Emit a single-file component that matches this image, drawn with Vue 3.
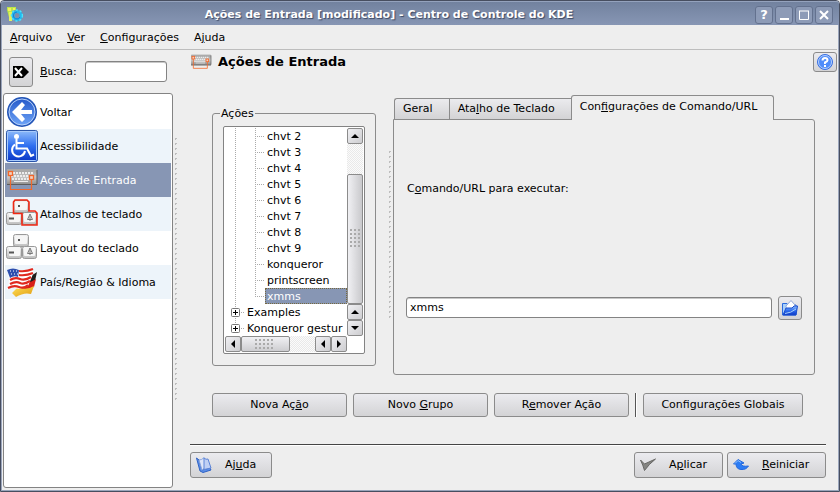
<script setup>
import { h, ref } from 'vue'

const search = ref('')
const command = ref('xmms')
const activeModule = ref('input')
const activeTab = ref('command')
const activeAction = ref('xmms')

const windowButtons = [
  { id: 'help', label: 'Ajuda' },
  { id: 'minimize', label: 'Minimizar' },
  { id: 'maximize', label: 'Maximizar' },
  { id: 'close', label: 'Fechar' }
]

const menus = ['&Arquivo', '&Ver', '&Configurações', 'A&juda']

const modules = [
  { id: 'back', label: 'Voltar' },
  { id: 'access', label: 'Acessibilidade' },
  { id: 'input', label: 'Ações de Entrada' },
  { id: 'shortcuts', label: 'Atalhos de teclado' },
  { id: 'layout', label: 'Layout do teclado' },
  { id: 'region', label: 'País/Região & Idioma' }
]

const actions = [
  'chvt 2', 'chvt 3', 'chvt 4', 'chvt 5', 'chvt 6', 'chvt 7',
  'chvt 8', 'chvt 9', 'konqueror', 'printscreen', 'xmms'
]
const groups = ['Examples', 'Konqueror gestur']

const tabs = [
  { id: 'general', label: 'Geral' },
  { id: 'shortcut', label: 'Ata&lho de Teclado' },
  { id: 'command', label: 'Con&figurações de Comando/URL' }
]

// Underlines the letter that follows "&"
function Mnemonic({ text }) {
  const at = text.indexOf('&')
  if (at < 0) return h('span', text)
  return h('span', [text.slice(0, at), h('u', text[at + 1]), text.slice(at + 2)])
}
Mnemonic.props = ['text']
</script>

<template>
  <div class="window">
    <svg class="sprite" width="0" height="0" aria-hidden="true">
      <defs>
        <linearGradient id="blue" x1="0" y1="0" x2="0" y2="1">
          <stop offset="0" stop-color="#2458c8" />
          <stop offset="1" stop-color="#6fa5f8" />
        </linearGradient>
        <linearGradient id="sign" x1="0" y1="0" x2="0" y2="1">
          <stop offset="0" stop-color="#8fbcfa" />
          <stop offset="0.5" stop-color="#2f6ff0" />
          <stop offset="1" stop-color="#0b36c4" />
        </linearGradient>
        <linearGradient id="metal" x1="0" y1="0" x2="0" y2="1">
          <stop offset="0" stop-color="#9a9a9a" />
          <stop offset="0.5" stop-color="#c8c8c8" />
          <stop offset="1" stop-color="#8a8a8a" />
        </linearGradient>
        <linearGradient id="keycap" x1="0" y1="0" x2="0" y2="1">
          <stop offset="0" stop-color="#f4f4f4" />
          <stop offset="1" stop-color="#bdbdbd" />
        </linearGradient>
        <linearGradient id="gold" x1="0" y1="0" x2="1" y2="1">
          <stop offset="0" stop-color="#ffe25a" />
          <stop offset="1" stop-color="#e09a10" />
        </linearGradient>
      </defs>

      <symbol id="icon-back" viewBox="0 0 32 32">
        <circle cx="16" cy="16" r="14" fill="url(#blue)" stroke="#2456b8" stroke-width="2" />
        <circle cx="16" cy="16" r="13" fill="none" stroke="#b9d3fb" />
        <path d="M6 16 L16 6 L19 9 L15 14 H26 V18 H15 L19 23 L16 26 Z" fill="#fff" />
      </symbol>

      <symbol id="icon-access" viewBox="0 0 32 32">
        <rect x="0.5" y="0.5" width="31" height="31" rx="2" fill="url(#sign)" stroke="#2a55a8" />
        <rect x="1.5" y="1.5" width="29" height="29" rx="1" fill="none" stroke="#a9cbfb" />
        <circle cx="10.500" cy="6.500" r="2.500" fill="#fff" />
        <path d="M10.500 9 V18.500 H21 L25 26 L28 24.500 M10.500 13 H18" fill="none" stroke="#fff" stroke-width="2" />
        <path d="M9 14.500 A6.500 6.500 0 1 0 19 21" fill="none" stroke="#fff" stroke-width="2" />
      </symbol>

      <symbol id="icon-input" viewBox="0 0 32 24">
        <rect x="1" y="1" width="30" height="16" rx="1" fill="url(#metal)" />
        <path d="M1 2 H31" stroke="#b4b4b4" />
        <path d="M1 16.500 H31 M31 2 V16" stroke="#5c5c5c" />
        <path d="M4 5 H28 M5 8 H28 M6 11 H27" stroke="#ececec" stroke-width="2" stroke-dasharray="2 1" />
        <path d="M8 13.500 H22" stroke="#ececec" />
        <path d="M4.500 7 V21.500 H25.500 V11" fill="none" stroke="#f2672a" stroke-width="1.200" />
        <rect x="2.500" y="3.500" width="4" height="4" fill="#f0d0c0" stroke="#f2672a" stroke-width="1.300" />
        <rect x="23.500" y="7.500" width="4" height="4" fill="#f0d0c0" stroke="#f2672a" stroke-width="1.300" />
      </symbol>

      <symbol id="keys" viewBox="0 0 32 32">
        <g fill="url(#keycap)" stroke="#999">
          <rect x="7.500" y="2.500" width="15" height="12" rx="2" />
          <rect x="0.500" y="14.500" width="15" height="12" rx="2" />
          <rect x="16.500" y="14.500" width="14" height="12" rx="2" />
        </g>
        <g fill="#f6f6f6">
          <rect x="9" y="4" width="12" height="8" rx="1" />
          <rect x="3" y="15" width="11" height="9" rx="1" />
          <rect x="18" y="15" width="11" height="9" rx="1" />
        </g>
        <path d="M12 8 H14 M3 20.500 H8" stroke="#555" stroke-width="2" />
        <path d="M24 16 L21.500 21.500 H26.500 Z M24 18 V23" fill="none" stroke="#777" />
      </symbol>

      <symbol id="icon-layout" viewBox="0 0 32 32">
        <use href="#keys" />
      </symbol>

      <symbol id="icon-shortcuts" viewBox="0 0 32 32">
        <use href="#keys" />
        <path d="M9 2 H21 L23 4 V13 H29 L31 15 V27 H16 V15.500 H7.500 V4 Z" fill="none" stroke="#f02814" stroke-width="1.600" />
      </symbol>

      <symbol id="icon-region" viewBox="0 0 32 32">
        <path d="M16 10 Q23 12 31 6 L29 15 Q21 20 14 17 Z" fill="#1d1d1d" />
        <path d="M14 15 Q22 19 30 13 L28 21 Q20 25 12 23 Z" fill="#d81f18" />
        <path d="M12 21 Q20 25 28 20 L25 28 Q18 26 10 31 L6 27 Z" fill="url(#gold)" />
        <path d="M1 4 Q8 1 14 4 T26 1 Q29 5 25 13 L22 20 Q14 24 9 22 T1 24 Q5 14 1 4 Z" fill="#fff" />
        <path d="M13 5 Q20 6 27 3 M13 9 Q20 10 27 7 M4 14 Q9 11 14 13 T25 11 M4 18 Q10 15 14 17 T24 15 M2 22 Q8 19 13 21 T22 19" fill="none" stroke="#e0281e" stroke-width="2.200" />
        <path d="M1 4 Q7 1 13 4 L12 11 Q8 9 4 12 Z" fill="#2d4fae" />
        <path d="M4 5 H12 M5 8 H12" stroke="#fff" stroke-dasharray="1 2" />
      </symbol>
    </svg>

    <header class="titlebar">
      <svg class="app-icon" viewBox="0 0 16 16" aria-hidden="true">
        <path d="M0 0 H9 V3 L5 4 V14 H3 L0 3 Z" fill="#b9e64a" />
        <path d="M1 1 H4 V4 H1 Z M6 1 H8 V3 H6 Z" fill="#f6ef5a" />
        <path d="M2 5 H5 V14 H2 Z" fill="#e2f060" />
        <circle cx="10" cy="8.500" r="4" fill="none" stroke="#23b8ee" stroke-width="3" />
        <circle cx="10" cy="8.500" r="5.500" fill="none" stroke="#4be2fa" stroke-width="1.500" stroke-dasharray="2 2" />
        <path d="M10 5 A3.500 3.500 0 1 0 13 10" fill="none" stroke="#1480d8" />
      </svg>
      <h1>Ações de Entrada [modificado] - Centro de Controle do KDE</h1>
      <div class="window-buttons">
        <button v-for="button in windowButtons" :key="button.id" type="button" :aria-label="button.label">
          <span v-if="button.id === 'help'">?</span>
          <svg v-else viewBox="0 0 12 12" width="12" height="12">
            <path v-if="button.id === 'minimize'" d="M2 10 H11" />
            <path v-else-if="button.id === 'maximize'" d="M1 2 H11 M1.500 2 V10.500 H10.500 V2" class="thin" />
            <path v-else d="M2 2 L10 10 M10 2 L2 10" />
          </svg>
        </button>
      </div>
    </header>

    <nav class="menubar">
      <button v-for="menu in menus" :key="menu" type="button"><Mnemonic :text="menu" /></button>
    </nav>

    <div class="body">
      <aside class="sidebar">
        <div class="search">
          <button class="push clear" type="button" aria-label="Limpar busca" @click="search = ''">
            <svg viewBox="0 0 16 12" width="16" height="12">
              <path d="M0 0 H10 L16 6 L10 12 H0 Z" fill="#000" />
              <path d="M2 2 L9 10 M9 2 L2 10" stroke="#fff" stroke-width="2" />
            </svg>
          </button>
          <label for="search"><Mnemonic text="&Busca:" /></label>
          <input id="search" v-model="search" class="field" type="text">
        </div>
        <ul class="modules">
          <li v-for="item in modules" :key="item.id">
            <button type="button" :class="{ active: item.id === activeModule }" @click="activeModule = item.id">
              <svg width="32" height="32" aria-hidden="true"><use :href="'#icon-' + item.id" /></svg>
              <span>{{ item.label }}</span>
            </button>
          </li>
        </ul>
      </aside>

      <div class="grip outer-grip"></div>

      <main class="content">
        <div class="heading">
          <svg width="22" height="16" aria-hidden="true"><use href="#icon-input" /></svg>
          <h2>Ações de Entrada</h2>
          <button class="push help" type="button" aria-label="O que é isto?">
            <svg viewBox="0 0 16 16" width="16" height="16">
              <circle cx="8" cy="8" r="7.500" fill="#4f8cfa" stroke="#3a6fe0" />
              <circle cx="8" cy="8" r="6.500" fill="none" stroke="#b3cffc" />
              <path d="M5.500 6.500 Q5.500 4 8 4 T10.500 6.300 Q10.500 7.500 8 8.500 V10 M8 11 V13" fill="none" stroke="#fff" stroke-width="2" />
            </svg>
          </button>
        </div>

        <div class="editor">
          <fieldset class="actions">
            <legend>Ações</legend>
            <div class="listview">
              <ul class="tree">
                <li v-for="action in actions" :key="action" class="leaf">
                  <span class="guide"></span>
                  <span class="guide branch" :class="{ last: action === 'xmms' }"></span>
                  <button type="button" :class="{ selected: action === activeAction }" @click="activeAction = action">{{ action }}</button>
                </li>
                <li v-for="group in groups" :key="group" class="group">
                  <svg class="expander" viewBox="0 0 9 9" width="9" height="9">
                    <rect x="0.500" y="0.500" width="8" height="8" rx="1" fill="#fff" stroke="#777" />
                    <path d="M2 4.500 H7 M4.500 2 V7" stroke="#000" />
                  </svg>
                  <button type="button">{{ group }}</button>
                </li>
              </ul>
              <div class="scroll vertical">
                <button type="button" aria-label="Acima"><svg viewBox="0 0 8 8"><path d="M0 6 L4 2 L8 6 Z" /></svg></button>
                <div class="track"></div>
                <div class="thumb"><span class="dots"></span></div>
                <button type="button" aria-label="Acima"><svg viewBox="0 0 8 8"><path d="M0 6 L4 2 L8 6 Z" /></svg></button>
                <button type="button" aria-label="Abaixo"><svg viewBox="0 0 8 8"><path d="M0 2 L4 6 L8 2 Z" /></svg></button>
              </div>
              <div class="scroll horizontal">
                <button type="button" aria-label="Esquerda"><svg viewBox="0 0 8 8"><path d="M6 0 L2 4 L6 8 Z" /></svg></button>
                <div class="thumb"><span class="dots"></span></div>
                <div class="track"></div>
                <button type="button" aria-label="Esquerda"><svg viewBox="0 0 8 8"><path d="M6 0 L2 4 L6 8 Z" /></svg></button>
                <button type="button" aria-label="Direita"><svg viewBox="0 0 8 8"><path d="M2 0 L6 4 L2 8 Z" /></svg></button>
              </div>
            </div>
          </fieldset>

          <div class="grip inner-grip"></div>

          <section class="tabview">
            <div class="tabs" role="tablist">
              <button
                v-for="tab in tabs"
                :key="tab.id"
                type="button"
                role="tab"
                :aria-selected="tab.id === activeTab"
                :class="{ active: tab.id === activeTab }"
                @click="activeTab = tab.id"
              >
                <Mnemonic :text="tab.label" />
              </button>
            </div>
            <div class="panel" role="tabpanel">
              <div class="panel-label">
                <label for="command"><Mnemonic text="C&omando/URL para executar:" /></label>
              </div>
              <div class="panel-field">
                <input id="command" v-model="command" class="field" type="text">
                <button class="push browse" type="button" aria-label="Abrir arquivo">
                  <svg viewBox="0 0 16 16" width="16" height="16">
                    <path d="M0.500 3.500 H5 L6 5 H14 V15 H0.500 Z" fill="#a9d0fa" stroke="#2b6ade" />
                    <path d="M4 6 L9 0.500 L13 5 V9 H4 Z" fill="#fff" stroke="#93a9d8" />
                    <path d="M1 15 L4 8 H10 L12 6 H15.500 L14 15 Z" fill="url(#sign)" stroke="#1a4fd0" />
                    <path d="M3 13.500 Q9 13 14 9" fill="none" stroke="#a9d0fa" />
                  </svg>
                </button>
              </div>
            </div>
          </section>
        </div>

        <div class="action-buttons">
          <button class="push" type="button"><Mnemonic text="Nova Aç&ão" /></button>
          <button class="push" type="button"><Mnemonic text="Novo &Grupo" /></button>
          <button class="push" type="button"><Mnemonic text="R&emover Ação" /></button>
          <div class="separator"></div>
          <button class="push wide" type="button"><Mnemonic text="Configura&ções Globais" /></button>
        </div>

        <footer class="footer">
          <button class="push" type="button">
            <svg viewBox="0 0 16 16" width="16" height="16">
              <path d="M0.500 1 L3 3 L6 13 L14 11 L15 13 L7 15.500 L4 14 Z" fill="#5c8fe8" stroke="#2f62c4" />
              <path d="M3 3 Q6 3 8 0.500 L10 10 L6 13 Z" fill="#dfe6f8" stroke="#8fa8de" />
              <path d="M8 1 Q10 3 12 2 L15 11 L8 12.500 Z" fill="#c0d0f4" stroke="#5d84d6" />
            </svg>
            <Mnemonic text="Aj&uda" />
          </button>
          <div class="spacer"></div>
          <button class="push apply" type="button">
            <svg viewBox="0 0 16 16" width="16" height="16">
              <path d="M0.500 3 L4.500 7 L15.500 2 Q9 7 4.500 13.500 Q3 8 0.500 3 Z" fill="#858582" stroke="#686866" />
            </svg>
            <Mnemonic text="A&plicar" />
          </button>
          <button class="push reset" type="button">
            <svg viewBox="0 0 16 16" width="16" height="16">
              <path d="M0.500 7 L5 2.500 L11 6 L8 7 Q9 10 15.500 9 Q13 13 8 12.500 Q3 12 3 7 Z" fill="#2c7cf4" stroke="#2468dc" />
              <path d="M2 6.500 L5 3.500 L8 5.500" fill="none" stroke="#8fc2ff" />
            </svg>
            <Mnemonic text="&Reiniciar" />
          </button>
        </footer>
      </main>
    </div>
  </div>
</template>

<style>
body {
  background: #eeeeee;
}
</style>

<style scoped>
.window {
  display: flex;
  flex-direction: column;
  min-height: 100vh;
  box-sizing: border-box;
  border: 1px solid #474e60;
  border-radius: 4px 4px 0 0;
  background: #eeeeee;
  box-shadow: inset 0 0 0 1px #9aa5bb;
  color: #000;
  font: 11px/14px "DejaVu Sans", sans-serif;
}

.window *,
.window *::before,
.window *::after {
  box-sizing: border-box;
}

.sprite {
  position: absolute;
}

button,
input {
  margin: 0;
  padding: 0;
  border: 0;
  background: none;
  color: inherit;
  font: inherit;
}

ul {
  margin: 0;
  padding: 0;
  list-style: none;
}

svg {
  flex: none;
  display: block;
}

.titlebar {
  display: flex;
  align-items: center;
  height: 24px;
  padding: 2px 6px 0 6px;
  border-top: 1px solid #94a2bd;
  border-radius: 3px 3px 0 0;
  background: linear-gradient(#72829f, #8796b4);
  color: #fff;
}

.app-icon {
  width: 16px;
  height: 16px;
}

.titlebar h1 {
  flex: 1;
  margin: 0;
  text-align: center;
  white-space: nowrap;
  font-size: 11px;
  line-height: 16px;
  text-shadow: 1px 1px 1px #3c4863;
}

.window-buttons {
  display: flex;
  gap: 2px;
}

.window-buttons button {
  display: flex;
  align-items: center;
  justify-content: center;
  width: 18px;
  height: 18px;
  border: 1px solid #63718e;
  border-radius: 3px;
  background: #8d9bb7;
  font-size: 13px;
  font-weight: bold;
}

.window-buttons path {
  fill: none;
  stroke: #fff;
  stroke-width: 2;
}

.window-buttons .thin {
  stroke-width: 1;
}

.menubar {
  display: flex;
  gap: 15px;
  height: 25px;
  margin: 0 2px;
  padding: 1px 7px 0;
  border-bottom: 1px solid #bdbdbd;
}

.body {
  flex: 1;
  display: flex;
  padding: 0 2px 3px;
}

.sidebar {
  flex: 0 0 170px;
  display: flex;
  flex-direction: column;
  min-width: 0;
}

.search {
  display: flex;
  align-items: center;
  height: 43px;
  padding: 0 6px;
}

.search label {
  margin: 0 8px 0 7px;
}

.search .field {
  flex: 1;
  min-width: 0;
}

.push {
  display: flex;
  align-items: center;
  justify-content: center;
  border: 1px solid #8b8b8b;
  border-radius: 3px;
  background: linear-gradient(#ebebef, #d3d3d5);
}

.clear {
  width: 24px;
  height: 30px;
}

.field {
  height: 21px;
  padding: 0 3px;
  border: 1px solid #838383;
  border-radius: 3px;
  background: #fff;
  box-shadow: inset 0 1px 0 #c8c8c8;
}

.modules {
  flex: 1;
  border: 1px solid #838383;
  border-radius: 3px;
  padding: 1px;
  background: #fff;
}

.modules li:nth-child(even) {
  background: #edf4fa;
}

.modules button {
  display: flex;
  align-items: center;
  gap: 2px;
  width: 100%;
  height: 34px;
  padding-left: 1px;
  text-align: left;
  white-space: nowrap;
}

.modules span {
  padding-top: 1px;
}

.modules .active {
  background: #8796b4;
  color: #fff;
}

.grip {
  flex: none;
  width: 3px;
  background: linear-gradient(#bdbdbd 1px, transparent 1px) 0 0 / 2px 5px repeat-y,
    linear-gradient(#bdbdbd 2px, transparent 2px) 0 0 / 1px 5px repeat-y;
}

.outer-grip {
  margin: 88px 0;
  margin-left: 2px;
}

.content {
  flex: 1;
  display: flex;
  flex-direction: column;
  min-width: 0;
  padding-left: 12px;
}

.heading {
  display: flex;
  align-items: center;
  gap: 6px;
  height: 24px;
}

.heading h2 {
  flex: 1;
  margin: 0;
  font-size: 13px;
  line-height: 16px;
}

.help {
  width: 24px;
  height: 20px;
}

.editor {
  flex: 1;
  display: flex;
  padding: 21px 22px 0;
}

.actions {
  flex: 0 0 164px;
  display: flex;
  min-width: 0;
  margin: 12px 0 9px;
  padding: 6px 10px 11px;
  border: 1px solid #8b8b8b;
  border-radius: 3px;
}

.actions legend {
  margin-left: -3px;
  padding: 0 1px;
  line-height: 13px;
}

.listview {
  flex: 1;
  display: grid;
  grid-template-columns: minmax(0, 1fr) 16px;
  grid-template-rows: minmax(0, 1fr) 16px;
  padding: 1px;
  border: 1px solid #838383;
  border-radius: 2px;
  background: #fff;
}

.tree {
  overflow: hidden;
}

.tree li {
  display: flex;
  height: 16px;
  white-space: nowrap;
}

.tree button {
  flex: 1;
  padding: 1px 2px 0;
  text-align: left;
}

.tree .selected {
  background: #8796b4;
  color: #fff;
  outline: 1px dotted #77693f;
  outline-offset: -1px;
}

.guide {
  flex: none;
  width: 20px;
  margin-left: 10px;
  background: repeating-linear-gradient(#aaa 0 1px, transparent 1px 2px) 0 0 / 1px 100% no-repeat;
}

.branch {
  width: 10px;
  margin-left: 0;
  background: repeating-linear-gradient(#aaa 0 1px, transparent 1px 2px) 0 0 / 1px 100% no-repeat,
    repeating-linear-gradient(90deg, #aaa 0 1px, transparent 1px 2px) 2px 8px / 7px 1px no-repeat;
}

.branch.last {
  background-size: 1px 9px, 7px 1px;
}

.tree .group {
  align-items: center;
  gap: 5px;
  padding-left: 6px;
  background: repeating-linear-gradient(#aaa 0 1px, transparent 1px 2px) 10px 0 / 1px 100% no-repeat,
    repeating-linear-gradient(90deg, #aaa 0 1px, transparent 1px 2px) 16px 8px / 4px 1px no-repeat;
}

.tree .group:last-child {
  background-size: 1px 8px, 4px 1px;
}

.scroll {
  display: flex;
}

.vertical {
  flex-direction: column;
}

.scroll button,
.thumb {
  display: flex;
  align-items: center;
  justify-content: center;
  flex: 0 0 16px;
  border: 1px solid #8b8b8b;
  border-radius: 2px;
  background: linear-gradient(135deg, #f0f0f3, #cdcdd0);
}

.scroll svg {
  width: 8px;
  height: 8px;
}

.track {
  background: repeating-conic-gradient(#e9e9e9 0 25%, #fbfbfb 0 50%) 0 0 / 2px 2px;
}

.vertical .track {
  flex: 30;
}

.vertical .thumb {
  flex: 130;
  background: linear-gradient(90deg, #f0f0f3, #c9c9cc);
}

.horizontal .track {
  flex: 26;
}

.horizontal .thumb {
  flex: 48;
  background: linear-gradient(#f0f0f3, #cdcdd0);
}

.dots {
  width: 10px;
  height: 20px;
  background: radial-gradient(circle at 1px 1px, #aaa 1px, transparent 1px) 0 0 / 4px 4px;
}

.horizontal .dots {
  width: 20px;
  height: 10px;
}

.inner-grip {
  margin: 56px 0;
  margin-left: 13px;
}

.tabview {
  flex: 1;
  display: flex;
  flex-direction: column;
  min-width: 0;
  margin-left: 1px;
}

.tabs {
  display: flex;
  align-items: flex-end;
  padding-left: 1px;
}

.tabs button {
  height: 21px;
  padding: 0 16px 1px 8px;
  border: 1px solid #8b8b8b;
  border-right-width: 0;
  border-bottom-width: 0;
  background: linear-gradient(#ebebee, #d3d3d5);
  white-space: nowrap;
}

.tabs button:first-child {
  border-radius: 3px 0 0 0;
}

.tabs .active {
  position: relative;
  height: 25px;
  margin-bottom: -1px;
  padding-bottom: 2px;
  border-right-width: 1px;
  border-radius: 3px 3px 0 0;
  background: #eeeeee;
}

.panel {
  flex: 1;
  display: flex;
  flex-direction: column;
  padding: 0 12px 16px;
  border: 1px solid #8b8b8b;
  border-radius: 0 3px 3px 3px;
}

.panel-label,
.panel-field {
  display: flex;
  align-items: center;
}

.panel-label {
  flex: 136;
}

.panel-label label {
  padding-left: 1px;
}

.panel-field {
  flex: 100;
  gap: 6px;
}

.panel-field .field {
  flex: 1;
  min-width: 0;
}

.browse {
  width: 24px;
  height: 24px;
}

.action-buttons {
  display: flex;
  gap: 6px;
  padding: 18px 22px 0;
}

.action-buttons .push {
  flex: 0 1 135px;
  height: 24px;
}

.separator {
  flex: none;
  width: 2px;
  background: linear-gradient(90deg, #555 50%, #fff 50%);
}

.action-buttons .wide {
  flex-basis: 160px;
}

.footer {
  display: flex;
  gap: 4px;
  margin: 27px 11px 0 0;
  padding: 7px 0 10px;
  border-top: 1px solid #444;
  box-shadow: inset 0 1px 0 #fff;
}

.footer .push {
  width: 82px;
  height: 26px;
  justify-content: flex-start;
  gap: 13px;
  padding-left: 5px;
}

.footer .apply {
  width: 89px;
}

.footer .reset {
  width: 99px;
}

.spacer {
  flex: 1;
}
</style>
